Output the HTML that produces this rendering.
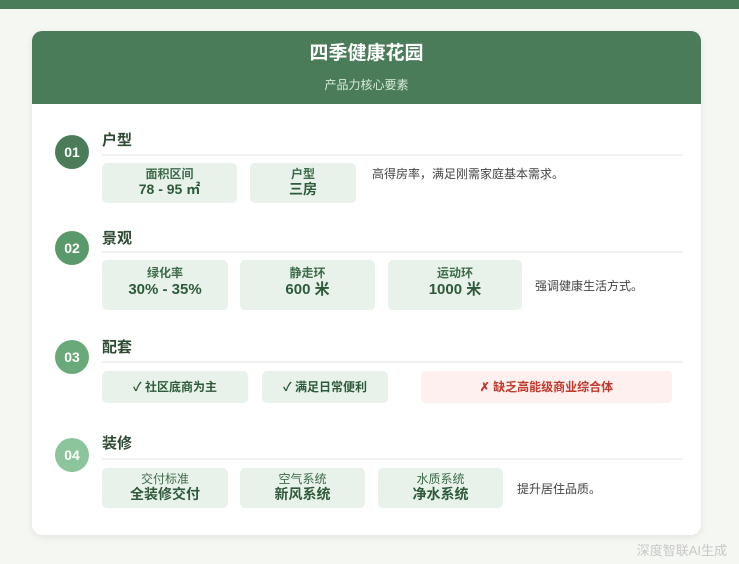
<!DOCTYPE html>
<html><head><meta charset="utf-8"><style>
*{margin:0;padding:0;box-sizing:border-box}
body{width:739px;height:564px;background:#f5f7f2;font-family:"Liberation Sans","Noto Sans CJK SC",sans-serif;position:relative;overflow:hidden}
.top{position:absolute;left:0;top:0;width:739px;height:9px;background:#4a7c59}
.card{position:absolute;left:32px;top:31px;width:669px;height:504px;background:#fff;border-radius:10px;box-shadow:0 2px 8px rgba(0,0,0,.08);overflow:hidden}
.hd{height:73px;background:#4a7c59;text-align:center;color:#fff}
.hd h1{font-size:19px;font-weight:bold;padding-top:10px;line-height:26px}
.hd p{font-size:12px;color:#d8ead9;margin-top:9px}
.c{position:absolute;width:34px;height:34px;border-radius:50%;color:#fff;font-weight:bold;font-size:14px;text-align:center;line-height:34px;left:55px}
.t{position:absolute;left:102px;font-size:15px;font-weight:bold;color:#2d4a33}
.ln{position:absolute;left:102px;width:581px;height:2px;background:#eef3ef}
.b{position:absolute;background:#e8f2ea;border-radius:5px;text-align:center;color:#2d5a3a}
.b .s{font-size:12px;color:#3d6b4a;font-weight:bold;line-height:14px}
.b .v{font-size:14px;font-weight:bold;line-height:17px}
.b .v2{font-size:15px;font-weight:bold;line-height:20px}
.x{position:absolute;font-size:12px;color:#444}
.m{font-size:12px;font-weight:bold;line-height:32px}
.ft{position:absolute;right:12px;top:540px;font-size:13px;color:#c8c8c8}
</style></head><body>
<div class="top"></div>
<div class="card"><div class="hd"><h1>四季健康花园</h1><p>产品力核心要素</p></div></div>

<div class="c" style="top:135px;background:#4a7c59">01</div>
<div class="t" style="top:129px">户型</div>
<div class="ln" style="top:154px"></div>
<div class="b" style="left:102px;top:163px;width:135px;height:40px;padding-top:4px"><div class="s">面积区间</div><div class="v">78 - 95 ㎡</div></div>
<div class="b" style="left:250px;top:163px;width:106px;height:40px;padding-top:4px"><div class="s">户型</div><div class="v">三房</div></div>
<div class="x" style="left:372px;top:165px">高得房率，满足刚需家庭基本需求。</div>

<div class="c" style="top:231px;background:#5a9a6a">02</div>
<div class="t" style="top:227px">景观</div>
<div class="ln" style="top:251px"></div>
<div class="b" style="left:102px;top:260px;width:126px;height:50px;padding-top:6px"><div class="s">绿化率</div><div class="v2">30% - 35%</div></div>
<div class="b" style="left:240px;top:260px;width:135px;height:50px;padding-top:6px"><div class="s">静走环</div><div class="v2">600 米</div></div>
<div class="b" style="left:388px;top:260px;width:134px;height:50px;padding-top:6px"><div class="s">运动环</div><div class="v2">1000 米</div></div>
<div class="x" style="left:535px;top:277px">强调健康生活方式。</div>

<div class="c" style="top:340px;background:#6aaa7a">03</div>
<div class="t" style="top:336px">配套</div>
<div class="ln" style="top:361px"></div>
<div class="b m" style="left:102px;top:371px;width:146px;height:32px">✓ 社区底商为主</div>
<div class="b m" style="left:262px;top:371px;width:126px;height:32px">✓ 满足日常便利</div>
<div class="b m" style="left:421px;top:371px;width:251px;height:32px;background:#fff0f0;color:#c0392b">✗ 缺乏高能级商业综合体</div>

<div class="c" style="top:438px;background:#8cc49c">04</div>
<div class="t" style="top:432px">装修</div>
<div class="ln" style="top:458px"></div>
<div class="b" style="left:102px;top:468px;width:126px;height:40px;padding-top:4px"><div class="s" style="font-weight:normal">交付标准</div><div class="v">全装修交付</div></div>
<div class="b" style="left:240px;top:468px;width:125px;height:40px;padding-top:4px"><div class="s" style="font-weight:normal">空气系统</div><div class="v">新风系统</div></div>
<div class="b" style="left:378px;top:468px;width:125px;height:40px;padding-top:4px"><div class="s" style="font-weight:normal">水质系统</div><div class="v">净水系统</div></div>
<div class="x" style="left:517px;top:480px">提升居住品质。</div>

<div class="ft">深度智联AI生成</div>
</body></html>
